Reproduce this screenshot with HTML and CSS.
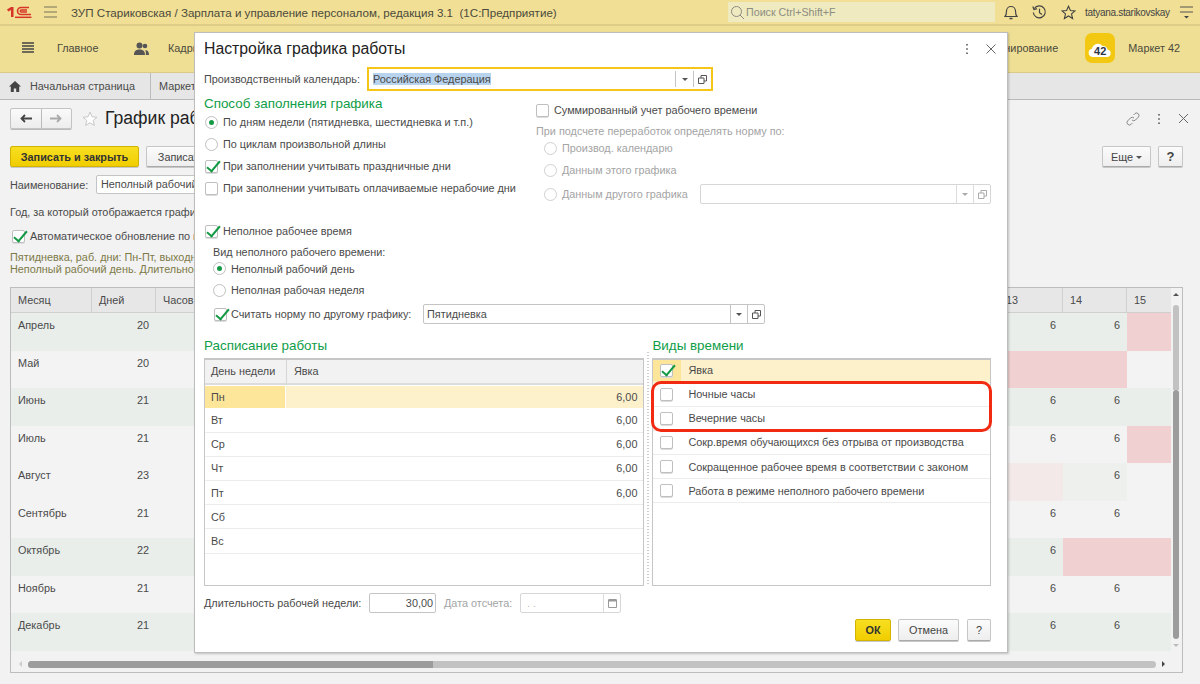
FILE: index.html
```html
<!DOCTYPE html>
<html lang="ru">
<head>
<meta charset="utf-8">
<title>1С</title>
<link rel="stylesheet" href="styles.css">
</head>
<body>
<div class="app">
  <header class="titlebar">
    <svg class="logo1c" width="26" height="14" viewBox="0 0 26 14"><path d="M1 4.500L5 2h2.500v10H5V5L2.300 6.500z" fill="#d8352a"/><path d="M23 2.500h-8a3.500 3.500 0 0 0 0 7h10" fill="none" stroke="#d8352a" stroke-width="1.600"/><path d="M21 5h-5.800a1 1 0 0 0 0 2H21" fill="none" stroke="#d8352a" stroke-width="1.300"/><path d="M9 12.300h16.500" stroke="#d8352a" stroke-width="1.500"/></svg>
    <svg class="tb-burger" width="13" height="12" viewBox="0 0 13 12"><path d="M0 1h13M0 6h13M0 11h13" stroke="#77725a" stroke-width="1.200"/></svg>
    <span class="apptitle">ЗУП Стариковская / Зарплата и управление персоналом, редакция 3.1&nbsp; (1С:Предприятие)</span>
    <div class="search">
      <svg width="15" height="15" viewBox="0 0 15 15"><circle cx="6.500" cy="6.500" r="5" fill="none" stroke="#8b8b80" stroke-width="1"/><path d="M10 10l4 4" stroke="#8b8b80" stroke-width="1"/></svg>
      <span>Поиск Ctrl+Shift+F</span>
    </div>
    <svg class="tb-ic bell" width="14" height="16" viewBox="0 0 14 16"><path d="M1 12.500c1.500-1.500 1.500-3 1.500-5.500a4.500 4.500 0 0 1 9 0c0 2.500 0 4 1.500 5.500z" fill="none" stroke="#444" stroke-width="1.200"/><path d="M5.500 14.500h3" stroke="#444" stroke-width="1.500"/></svg>
    <svg class="tb-ic hist" width="15" height="15" viewBox="0 0 15 15"><path d="M2.300 3.500a6 6 0 1 1-1 4" fill="none" stroke="#444" stroke-width="1.200"/><path d="M0.800 1.500l1.200 3 3-.8M7.500 3.800v4l2.500 1.700" fill="none" stroke="#444" stroke-width="1.200"/></svg>
    <svg class="tb-ic star" width="15" height="15" viewBox="0 0 15 15"><path d="M7.500 1.200l1.900 4.300 4.600.4-3.500 3 1.100 4.600-4.100-2.500-4.100 2.500 1.100-4.600L1 5.900l4.600-.4z" fill="none" stroke="#444" stroke-width="1.100"/></svg>
    <span class="user">tatyana.starikovskay</span>
    <svg class="tb-menu" width="13" height="13" viewBox="0 0 13 13"><path d="M0 1h13M0 6h13" stroke="#555" stroke-width="1.100"/><path d="M4 10h5l-2.500 2.500z" fill="#444"/></svg>
  </header>

  <nav class="sections">
    <svg class="sec-burger" width="12" height="12" viewBox="0 0 12 12"><path d="M0 1h12M0 4h12M0 7h12M0 10h12" stroke="#444" stroke-width="1.500"/></svg>
    <span class="sec-main">Главное</span>
    <svg class="sec-people" width="15" height="13" viewBox="0 0 15 13"><circle cx="5.500" cy="3.500" r="3" fill="#555"/><circle cx="11" cy="4" r="2.300" fill="#555"/><path d="M0 13c0-4 2-5.500 5.500-5.500S11 9 11 13zM11.800 13h3.200c0-3-1-4.800-3.600-5 .4 1.500.6 3 .4 5z" fill="#555"/></svg>
    <span class="sec-staff">Кадры</span>
    <span class="sec-plan">Планирование</span>
    <div class="market">
      <svg width="24" height="15" viewBox="0 0 24 15"><path d="M4.500 15a4.200 4.200 0 0 1-.5-8.300A6 6 0 0 1 14.500 4 4.300 4.300 0 0 1 19.500 7.500a3.800 3.800 0 0 1 0 7.500z" fill="#fff"/></svg>
      <b>42</b>
    </div>
    <span class="sec-market">Маркет 42</span>
  </nav>

  <div class="tabs">
    <div class="tab home">
      <svg width="12" height="11" viewBox="0 0 12 11"><path d="M6 0L0 5.500h1.800V11h3V7.500h2.400V11h3V5.500H12z" fill="#444"/></svg>
      <span>Начальная страница</span>
    </div>
    <div class="tab">Маркет</div>
  </div>

  <main class="form">
    <div class="form-head">
      <div class="navbox">
        <span class="navbtn"><svg width="12" height="9" viewBox="0 0 12 9"><path d="M12 4.500H2M5 1L1.500 4.500 5 8" fill="none" stroke="#444" stroke-width="1.800"/></svg></span>
        <span class="navbtn"><svg width="12" height="9" viewBox="0 0 12 9"><path d="M0 4.500h10M7 1l3.500 3.500L7 8" fill="none" stroke="#aaa" stroke-width="1.800"/></svg></span>
      </div>
      <svg class="fav" width="16" height="16" viewBox="0 0 16 16"><path d="M8 1l2 4.800 5 .4-3.800 3.300 1.200 5L8 11.800l-4.400 2.700 1.200-5L1 6.200l5-.4z" fill="#fff" stroke="#c8c8c8"/></svg>
      <h1>График работы</h1>
      <div class="form-tools">
        <svg width="14" height="14" viewBox="0 0 14 14"><path d="M6 8a2.500 2.500 0 0 0 3.500 0l3-3A2.500 2.500 0 0 0 9 1.500L7.500 3M8 6a2.500 2.500 0 0 0-3.500 0l-3 3A2.500 2.500 0 0 0 5 12.500L6.500 11" fill="none" stroke="#888"/></svg>
        <svg width="4" height="12" viewBox="0 0 4 12"><path d="M2 1v1.600M2 5.200v1.600M2 9.400V11" stroke="#555" stroke-width="1.600"/></svg>
        <svg width="11" height="11" viewBox="0 0 11 11"><path d="M1 1l9 9M10 1l-9 9" stroke="#666"/></svg>
      </div>
    </div>
    <div class="cmd">
      <button class="btn primary wide">Записать и закрыть</button>
      <button class="btn save">Записать</button>
      <button class="btn more">Еще <i class="caret"></i></button>
      <button class="btn help">?</button>
    </div>
    <div class="name-row">
      <label>Наименование:</label>
      <div class="name-field">Неполный рабочий день</div>
    </div>
    <div class="year-row">Год, за который отображается график:</div>
    <div class="auto-row"><span class="cb on"></span><span>Автоматическое обновление по графику</span></div>
    <div class="note">Пятидневка, раб. дни: Пн-Пт, выходные: Сб, Вс<br>Неполный рабочий день. Длительность недели: 30</div>

    <div class="months">
      <div class="m-grid">
        <div class="th">Месяц</div><div class="th">Дней</div><div class="th">Часов</div><div class="th gap"></div><div class="th">13</div><div class="th">14</div><div class="th last">15</div>

        <div class="td g">Апрель</div><div class="td g r">20</div><div class="td g"></div><div class="td g"></div><div class="td g r">6</div><div class="td g r">6</div><div class="td p"></div>
        <div class="td">Май</div><div class="td r">20</div><div class="td"></div><div class="td"></div><div class="td p"></div><div class="td p"></div><div class="td"></div>
        <div class="td g">Июнь</div><div class="td g r">21</div><div class="td g"></div><div class="td g"></div><div class="td g r">6</div><div class="td g r">6</div><div class="td g"></div>
        <div class="td">Июль</div><div class="td r">21</div><div class="td"></div><div class="td"></div><div class="td r">6</div><div class="td r">6</div><div class="td p"></div>
        <div class="td">Август</div><div class="td r">23</div><div class="td"></div><div class="td"></div><div class="td lp"></div><div class="td lg r">6</div><div class="td"></div>
        <div class="td">Сентябрь</div><div class="td r">21</div><div class="td"></div><div class="td"></div><div class="td r">6</div><div class="td r">6</div><div class="td"></div>
        <div class="td g">Октябрь</div><div class="td g r">22</div><div class="td g"></div><div class="td g"></div><div class="td g r">6</div><div class="td p"></div><div class="td p"></div>
        <div class="td">Ноябрь</div><div class="td r">21</div><div class="td"></div><div class="td"></div><div class="td r">6</div><div class="td r">6</div><div class="td"></div>
        <div class="td g">Декабрь</div><div class="td g r">21</div><div class="td g"></div><div class="td g"></div><div class="td g r">6</div><div class="td g r">6</div><div class="td g"></div>
      </div>
      <div class="vscroll"><i class="up"></i><div class="vtrack"><div class="vlight"></div><div class="vdark"></div></div><i class="down"></i></div>
      <div class="hscroll"><i class="left"></i><div class="htrack"><div class="hdark"></div></div><i class="right"></i></div>
    </div>
  </main>
</div>

<section class="dialog">
  <div class="d-head">
    <h2>Настройка графика работы</h2>
    <svg class="d-dots" width="4" height="12" viewBox="0 0 4 12"><path d="M2 1v1.600M2 5.200v1.600M2 9.400V11" stroke="#555" stroke-width="1.600"/></svg>
    <svg class="d-close" width="10" height="10" viewBox="0 0 10 10"><path d="M.5.5l9 9M9.500.5l-9 9" stroke="#666"/></svg>
  </div>

  <div class="cal-row">
    <label>Производственный календарь:</label>
    <div class="field focus cal-field">
      <div class="val"><span class="sel">Российская Федерация</span></div>
      <span class="fbtn"><i class="caret"></i></span>
      <span class="fbtn"><svg width="9" height="9" viewBox="0 0 9 9"><path d="M3 3V.5h5.500V6H6M.5 3h5.500v5.500H.5z" fill="none" stroke="#555"/></svg></span>
    </div>
  </div>

  <div class="top-cols">
    <div class="col-l">
      <h3>Способ заполнения графика</h3>
      <div class="opt"><span class="rb on"></span>По дням недели (пятидневка, шестидневка и т.п.)</div>
      <div class="opt"><span class="rb"></span>По циклам произвольной длины</div>
      <div class="opt"><span class="cb on"></span>При заполнении учитывать праздничные дни</div>
      <div class="opt"><span class="cb"></span>При заполнении учитывать оплачиваемые нерабочие дни</div>
      <div class="opt partial"><span class="cb on"></span>Неполное рабочее время</div>
      <div class="indent">
        <div class="sub-label">Вид неполного рабочего времени:</div>
        <div class="opt tight"><span class="rb on"></span>Неполный рабочий день</div>
        <div class="opt tall"><span class="rb"></span>Неполная рабочая неделя</div>
      </div>
    </div>
    <div class="col-r">
      <div class="opt sum"><span class="cb"></span>Суммированный учет рабочего времени</div>
      <div class="sub-label dim">При подсчете переработок определять норму по:</div>
      <div class="indent-r">
        <div class="opt dim tight-r"><span class="rb"></span>Производ. календарю</div>
        <div class="opt dim this"><span class="rb"></span>Данным этого графика</div>
        <div class="opt dim other">
          <span class="rb"></span><span class="other-label">Данным другого графика</span>
          <div class="field dimfield other-field">
            <div class="val"></div>
            <span class="fbtn"><i class="caret"></i></span>
            <span class="fbtn"><svg width="9" height="9" viewBox="0 0 9 9"><path d="M3 3V.5h5.500V6H6M.5 3h5.500v5.500H.5z" fill="none" stroke="#aaa"/></svg></span>
          </div>
        </div>
      </div>
    </div>
  </div>

  <div class="norm-row">
    <span class="cb on"></span><span class="norm-label">Считать норму по другому графику:</span>
    <div class="field norm-field">
      <div class="val">Пятидневка</div>
      <span class="fbtn"><i class="caret"></i></span>
      <span class="fbtn"><svg width="9" height="9" viewBox="0 0 9 9"><path d="M3 3V.5h5.500V6H6M.5 3h5.500v5.500H.5z" fill="none" stroke="#555"/></svg></span>
    </div>
  </div>

  <div class="tables">
    <div class="panel sched">
      <h3>Расписание работы</h3>
      <div class="tbl">
        <div class="s-head"><span class="c1">День недели</span><span class="c2">Явка</span></div>
        <div class="s-row cur"><span class="c1">Пн</span><span class="c2">6,00</span></div>
        <div class="s-row"><span class="c1">Вт</span><span class="c2">6,00</span></div>
        <div class="s-row"><span class="c1">Ср</span><span class="c2">6,00</span></div>
        <div class="s-row"><span class="c1">Чт</span><span class="c2">6,00</span></div>
        <div class="s-row"><span class="c1">Пт</span><span class="c2">6,00</span></div>
        <div class="s-row"><span class="c1">Сб</span><span class="c2"></span></div>
        <div class="s-row"><span class="c1">Вс</span><span class="c2"></span></div>
      </div>
    </div>
    <div class="splitter"></div>
    <div class="panel kinds">
      <h3>Виды времени</h3>
      <div class="tbl">
        <div class="k-row cur"><span class="k-c"><span class="cb on"></span></span><span>Явка</span></div>
        <div class="k-row"><span class="k-c"><span class="cb"></span></span><span>Ночные часы</span></div>
        <div class="k-row"><span class="k-c"><span class="cb"></span></span><span>Вечерние часы</span></div>
        <div class="k-row"><span class="k-c"><span class="cb"></span></span><span>Сокр.время обучающихся без отрыва от производства</span></div>
        <div class="k-row"><span class="k-c"><span class="cb"></span></span><span>Сокращенное рабочее время в соответствии с законом</span></div>
        <div class="k-row"><span class="k-c"><span class="cb"></span></span><span>Работа в режиме неполного рабочего времени</span></div>
        <div class="highlight"></div>
      </div>
    </div>
  </div>

  <div class="week-row">
    <label>Длительность рабочей недели:</label>
    <div class="field num"><div class="val">30,00</div></div>
    <label class="dim date-label">Дата отсчета:</label>
    <div class="field dimfield date">
      <div class="val">. .</div>
      <span class="fbtn"><svg width="9" height="10" viewBox="0 0 9 10"><path d="M.5 2h8v7.500h-8z" fill="none" stroke="#999"/><path d="M.5 1h8v2.500h-8z" fill="#999"/></svg></span>
    </div>
  </div>

  <div class="d-foot">
    <button class="btn primary ok">ОК</button>
    <button class="btn cancel">Отмена</button>
    <button class="btn dhelp">?</button>
  </div>
</section>
</body>
</html>
```
FILE: styles.css
```css
* { box-sizing: border-box; }
html, body { margin: 0; height: 100%; overflow: hidden; }
body { font-family: "Liberation Sans", Arial, sans-serif; font-size: 10.85px; color: #4a4a4a; background: #f2f2f2; }
.app { width: 1200px; height: 684px; display: flex; flex-direction: column; }

.titlebar { height: 26px; background: #f0df94; border-bottom: 2px solid #ddcd86; display: flex; align-items: center; flex: none; }
.logo1c { margin-left: 6px; }
.tb-burger { margin-left: 12px; }
.apptitle { margin-left: 14px; font-size: 11.6px; color: #4c4a3c; width: 650px; white-space: nowrap; flex: none; }
.search { width: 267px; height: 20px; background: #efeac0; display: flex; align-items: center; gap: 1px; padding-left: 2px; color: #8d8d80; font-size: 10.7px; margin-left: 7px; flex: none; }
.tb-ic { flex: none; }
.bell { margin-left: 9px; }
.hist { margin-left: 14px; }
.star { margin-left: 14px; }
.user { margin-left: 9px; font-size: 10px; letter-spacing: -0.3px; color: #444; white-space: nowrap; width: 84px; flex: none; }
.tb-menu { margin-left: 11px; flex: none; }

.sections { height: 47px; background: #efdf95; border-bottom: 1px solid #d9ca88; display: flex; align-items: center; flex: none; font-size: 10.85px; color: #4a4a3c; padding: 0 20px 2px 0; }
.sec-burger { margin-left: 22px; }
.sec-main { margin-left: 23px; width: 42px; }
.sec-people { margin-left: 35px; }
.sec-staff { margin-left: 19px; }
.sec-plan { margin-left: auto; white-space: nowrap; }
.market { margin-left: 27px; width: 30px; height: 30px; background: #f3c812; border-radius: 7px; position: relative; display: flex; align-items: center; justify-content: center; }
.market b { position: absolute; left: 0; right: 0; top: 12px; text-align: center; font-size: 11px; color: #2c3445; }
.market svg { margin-top: 3px; }
.sec-market { margin-left: 13px; white-space: nowrap; }

.tabs { height: 27px; background: #e6e6e6; border-bottom: 1px solid #b9b9b9; display: flex; flex: none; font-size: 10.85px; color: #4a4a4a; padding-bottom: 1px; }
.tab { display: flex; align-items: center; padding-left: 8px; }
.tab.home { width: 151px; padding-left: 9px; gap: 9px; border-right: 1px solid #bcbcbc; margin-bottom: -1px; }

.form { flex: 1; padding: 8px 17px 0 10px; position: relative; min-height: 0; }
.form-head { height: 21px; display: flex; align-items: center; }
.navbox { width: 62px; height: 21px; display: flex; border: 1px solid #c4c4c4; border-radius: 2px; background: linear-gradient(#fafafa, #ededed); box-shadow: 0 1px 0 #bbb; }
.navbtn { flex: 1; display: flex; align-items: center; justify-content: center; }
.navbtn:first-child { border-right: 1px solid #bbb; }
.fav { margin-left: 10px; }
h1 { margin: 0 0 0 7px; font-size: 17.6px; font-weight: 400; color: #222; white-space: nowrap; }
.form-tools { margin-left: auto; margin-right: -6px; display: flex; align-items: center; gap: 17px; }

.btn { font-family: inherit; font-size: 10.85px; color: #444; background: linear-gradient(#fbfbfb, #eeeeee); border: 1px solid #c6c6c6; border-bottom-color: #aaa; border-radius: 2px; height: 21px; padding: 0; box-shadow: 0 1px 0 #c8c8c8; }
.btn.primary { background: linear-gradient(#f8df22, #f0cd00); border-color: #d2b400; color: #333; font-weight: 700; }
.caret { display: inline-block; border: 3px solid transparent; border-top-color: #555; border-bottom-width: 0; vertical-align: middle; }
.cmd { display: flex; margin-top: 17px; }
.wide { width: 129px; }
.save { width: 70px; margin-left: 7px; }
.more { width: 49px; margin-left: auto; }
.help { width: 25px; margin-left: 7px; font-weight: 700; font-size: 13px; }

.name-row { display: flex; align-items: center; margin-top: 8px; height: 19px; }
.name-row label { width: 86px; }
.name-field { width: 200px; height: 19px; border: 1px solid #c4c4c4; border-radius: 2px; background: #fff; padding: 2px 4px; white-space: nowrap; }
.year-row { margin-top: 12px; height: 14px; white-space: nowrap; }
.auto-row { margin-top: 9px; display: flex; align-items: center; height: 14px; padding-left: 2px; gap: 5px; white-space: nowrap; }
.note { margin-top: 8px; color: #7d7a48; line-height: 12px; white-space: nowrap; }

.months { margin-top: 12px; position: relative; width: 1173px; height: 386px; border: 1px solid #bdbdbd; background: #f2f2f2; }
.m-grid { display: grid; width: 1160px; grid-template-columns: 81px 64px 64px 779px 64px 64px 44px; grid-template-rows: 25px repeat(9, 37.500px); }
.th { background: #e7e7e7; border-right: 1px solid #cfcfcf; border-bottom: 1px solid #cfcfcf; padding: 6px 7px; }
.th.gap { border-right: 0; }
.th.last { border-right: 0; }
.td { background: #f3f3f3; padding: 6px 7px; }
.td.g { background: #e9eeeb; }
.td.p { background: #f1d0d2; }
.td.lp { background: #f3e9e9; }
.td.lg { background: #eef0ed; }
.td.r { text-align: right; padding-right: 7px; }
.vscroll { position: absolute; right: 0; top: 0; bottom: 22px; width: 12px; display: flex; flex-direction: column; align-items: center; }
.vtrack { flex: 1; width: 6px; margin-top: 9px; margin-bottom: 3px; display: flex; flex-direction: column; }
.vlight { height: 85px; background: #c2c2c2; border-radius: 3px 3px 0 0; }
.vdark { flex: 1; background: #9c9c9c; border-radius: 3px; }
.up, .down { border: 3px solid transparent; width: 0; height: 0; margin-top: 5px; }
.up { border-bottom-color: #555; border-top-width: 0; }
.down { border-top-color: #bbb; border-bottom-width: 0; margin-top: 2px; margin-bottom: 3px; }
.hscroll { position: absolute; left: 0; right: 12px; bottom: 1px; height: 14px; display: flex; align-items: center; }
.left { border: 3px solid transparent; border-right-color: #ccc; border-left-width: 0; margin-left: 8px; }
.right { border: 3px solid transparent; border-left-color: #444; border-right-width: 0; margin-left: 6px; margin-right: 5px; }
.htrack { flex: 1; height: 7px; background: #c2c2c2; border-radius: 4px; margin-left: 6px; }
.hdark { width: 405px; height: 7px; background: #9c9c9c; border-radius: 4px 0 0 4px; }

/* dialog floats over the page */
.dialog { position: absolute; left: 194px; top: 32px; width: 814px; height: 621px; background: #fff; border: 1px solid #bdbdbd; box-shadow: 1px 1px 2px rgba(0,0,0,.2); padding: 0 16px 0 9px; }
.d-head { height: 34px; display: flex; align-items: center; padding-bottom: 3px; }
h2 { margin: 0; font-size: 15.8px; font-weight: 400; color: #222; }
.d-dots { margin-left: auto; }
.d-close { margin-left: 17px; margin-right: -5px; }

.field { display: flex; align-items: stretch; border: 1px solid #c4c4c4; border-radius: 2px; background: #fff; }
.val { flex: 1; padding: 0 3px; display: flex; align-items: center; white-space: nowrap; }
.fbtn { width: 17px; border-left: 1px solid #c4c4c4; display: flex; align-items: center; justify-content: center; }

.cal-row { display: flex; align-items: center; height: 24px; }
.cal-row label { width: 163px; white-space: nowrap; }
.cal-field { width: 346px; height: 24px; border: 2px solid #f5c518; border-radius: 0; }
.cal-field .val { padding-left: 4px; }
.cal-field .fbtn { margin: 2px 0; width: 18px; }
.sel { background: #b8d3ee; }

h3 { margin: 0; height: 16px; padding-top: 1px; font-size: 13.4px; font-weight: 400; color: #0f9d48; line-height: 16px; white-space: nowrap; }
.top-cols { display: flex; margin-top: 4px; }
.col-l { width: 332px; flex: none; }
.col-r { flex: 1; }
.opt { display: flex; align-items: center; height: 22px; white-space: nowrap; gap: 5px; }
.partial { margin-top: 21px; }
.indent { padding-left: 9px; }
.sub-label { height: 14px; line-height: 14px; margin-top: 3px; white-space: nowrap; }
.tight { height: 19px; }
.tall { height: 24px; }
.dim { color: #a4a4a4; }

.col-r .sum { margin-top: 4px; }
.col-r .sub-label { margin-top: 3px; }
.indent-r { padding-left: 8px; }
.indent-r .opt { gap: 5px; }
.tight-r { height: 20px; }
.this { margin-top: 1px; }
.other { height: 26px; }
.other-label { width: 134px; flex: none; }
.other-field { width: 291px; height: 20px; margin-left: -1px; flex: none; }
.dimfield { border-color: #d6d6d6; }
.dimfield .fbtn { border-left-color: #dcdcdc; }
.dimfield .caret { border-top-color: #aaa; }

.cb { width: 13px; height: 13px; flex: none; display: inline-block; border: 1px solid #bfbfbf; border-radius: 2px; background: #fff; box-shadow: 0 1px 0 #ddd; position: relative; }
.cb.on::after { content: ""; position: absolute; left: 4px; top: -3px; width: 5px; height: 12px; border: solid #149a45; border-width: 0 2px 2px 0; transform: rotate(40deg); }
.rb { width: 13px; height: 13px; flex: none; display: inline-block; border: 1px solid #bfbfbf; border-radius: 50%; background: #fff; position: relative; }
.rb.on::after { content: ""; position: absolute; left: 3px; top: 3px; width: 5px; height: 5px; border-radius: 50%; background: #149a45; }
.col-l > .opt .cb, .col-l > .opt .rb { margin-left: 1px; }
.dim .rb { border-color: #d0d0d0; }

.norm-row { display: flex; align-items: center; height: 22px; padding-left: 10px; gap: 4px; margin-top: 1px; }
.norm-label { width: 189px; white-space: nowrap; flex: none; }
.norm-field { width: 342px; height: 20px; margin-left: -1px; flex: none; }

.tables { display: flex; height: 249px; margin-top: 12px; }
.panel { display: flex; flex-direction: column; }
.panel h3 { height: 21px; flex: none; }
.sched { width: 441px; }
.kinds { width: 339px; }
.splitter { width: 8px; margin-top: 14px; background: radial-gradient(circle, #ccc 0.5px, transparent 1px) center top / 2px 3px repeat-y; }
.tbl { flex: 1; border: 1px solid #c6c6c6; border-top-width: 2px; position: relative; background: #fff; }
.s-head { height: 25px; display: flex; background: #f2f2f2; border-bottom: 2px solid #dcdcdc; }
.s-head .c1 { width: 82px; padding: 5px 6px; border-right: 1px solid #d6d6d6; flex: none; }
.s-head .c2 { padding: 5px 7px; flex: 1; }
.s-row { height: 24.200px; display: flex; align-items: center; border-bottom: 1px solid #ececec; }
.s-row .c1 { width: 81px; padding-left: 6px; height: 100%; display: flex; align-items: center; flex: none; }
.s-row .c2 { flex: 1; text-align: right; padding-right: 6px; }
.s-row.cur { background: #fdf1cc; margin-top: 1px; height: 22.500px; border-bottom-color: #fff; }
.s-row.cur .c1 { background: #fde59a; border-right: 1px solid #fff; }

.k-row { height: 24.200px; display: flex; align-items: center; border-bottom: 1px solid #ececec; }
.k-row.cur { background: #fdf1cc; border-bottom-color: #fdf1cc; height: 22.500px; padding-bottom: 1px; }
.k-c { width: 35px; flex: none; height: 100%; display: flex; align-items: center; padding-left: 7px; }
.k-row.cur .k-c { background: #fde59a; width: 28px; margin-right: 7px; padding-left: 7px; }
.highlight { position: absolute; left: -2px; right: -2px; top: 21px; height: 51px; border: 3px solid #f32a12; border-radius: 10px; }

.week-row { display: flex; align-items: center; height: 20px; margin-top: 7px; }
.week-row label { white-space: nowrap; }
.week-row > label:first-child { width: 165px; }
.num { width: 67px; height: 20px; }
.num .val { justify-content: flex-end; padding-right: 2px; }
.date-label { margin-left: 8px; width: 76px; }
.date { width: 101px; height: 20px; }
.date .val { color: #bbb; padding-left: 6px; }
.d-foot { display: flex; justify-content: flex-end; margin-top: 6px; }
.ok { width: 36px; height: 22px; }
.cancel { width: 61px; margin-left: 7px; height: 22px; }
.dhelp { width: 24px; margin-left: 8px; height: 22px; }
```
